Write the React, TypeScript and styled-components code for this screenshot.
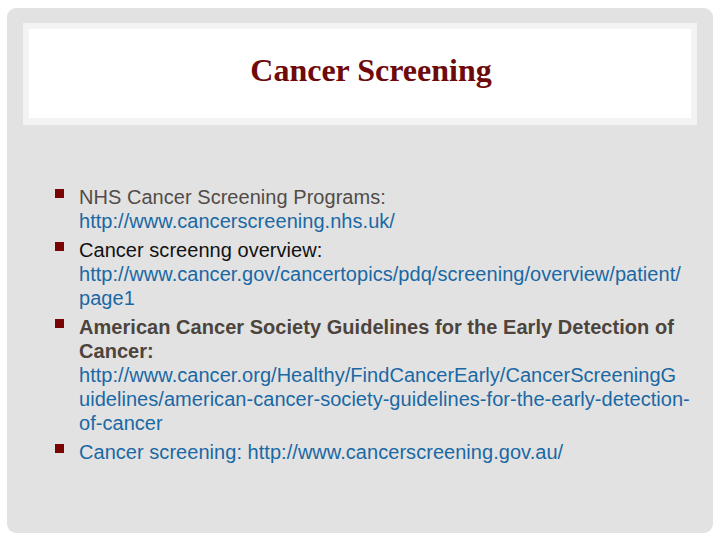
import styled, { createGlobalStyle } from 'styled-components';

const GlobalStyle = createGlobalStyle`
  html, body {
    margin: 0;
    padding: 0;
    background: #ffffff;
  }
`;

const Page = styled.div`
  width: 720px;
  height: 540px;
  box-sizing: border-box;
  padding: 8px 7px 7px 7px;
  overflow: hidden;
`;

const Slide = styled.div`
  height: 100%;
  box-sizing: border-box;
  padding: 15px 16px 0 16px;
  background: #e2e2e2;
  border-radius: 9px;
`;

const TitleBand = styled.div`
  height: 102px;
  box-sizing: border-box;
  border: solid #f3f3f3;
  border-width: 6px 6px 7px 6px;
  background: #ffffff;
  display: flex;
  justify-content: center;
  padding: 23px 0 0 22px;
`;

const Title = styled.h1`
  margin: 0;
  font-family: "Liberation Serif", serif;
  font-weight: bold;
  font-size: 32px;
  line-height: 37px;
  color: #6e0a0a;
`;

const List = styled.ul`
  list-style: none;
  margin: 60px 0 0 0;
  padding: 0 0 0 32px;
  display: flex;
  flex-direction: column;
  gap: 5px;
`;

const Item = styled.li`
  display: flex;
  gap: 15px;
`;

const Bullet = styled.span`
  flex: none;
  width: 9px;
  height: 9px;
  margin-top: 4px;
  background: #7a0404;
`;

const Lines = styled.div`
  font-family: "Liberation Sans", sans-serif;
  font-size: 20px;
  line-height: 24px;
  letter-spacing: 0.04px;
  white-space: nowrap;
`;

const Line = styled.div<{ $tone: 'grey' | 'black' | 'link' | 'bold' }>`
  color: ${(p) =>
    p.$tone === 'grey' ? '#514c48' : p.$tone === 'black' ? '#111111' : p.$tone === 'bold' ? '#4c443d' : '#1a68a4'};
  font-weight: ${(p) => (p.$tone === 'bold' ? 'bold' : 'normal')};
`;

export default function App() {
  return (
    <Page>
      <GlobalStyle />
      <Slide>
        <TitleBand>
          <Title>Cancer Screening</Title>
        </TitleBand>
        <List>
          <Item>
            <Bullet />
            <Lines>
              <Line $tone="grey">NHS Cancer Screening Programs:</Line>
              <Line $tone="link">http://www.cancerscreening.nhs.uk/</Line>
            </Lines>
          </Item>
          <Item>
            <Bullet />
            <Lines>
              <Line $tone="black">Cancer screenng overview:</Line>
              <Line $tone="link">http://www.cancer.gov/cancertopics/pdq/screening/overview/patient/</Line>
              <Line $tone="link">page1</Line>
            </Lines>
          </Item>
          <Item>
            <Bullet />
            <Lines>
              <Line $tone="bold">American Cancer Society Guidelines for the Early Detection of</Line>
              <Line $tone="bold">Cancer:</Line>
              <Line $tone="link">http://www.cancer.org/Healthy/FindCancerEarly/CancerScreeningG</Line>
              <Line $tone="link">uidelines/american-cancer-society-guidelines-for-the-early-detection-</Line>
              <Line $tone="link">of-cancer</Line>
            </Lines>
          </Item>
          <Item>
            <Bullet />
            <Lines>
              <Line $tone="link">Cancer screening: http://www.cancerscreening.gov.au/</Line>
            </Lines>
          </Item>
        </List>
      </Slide>
    </Page>
  );
}
